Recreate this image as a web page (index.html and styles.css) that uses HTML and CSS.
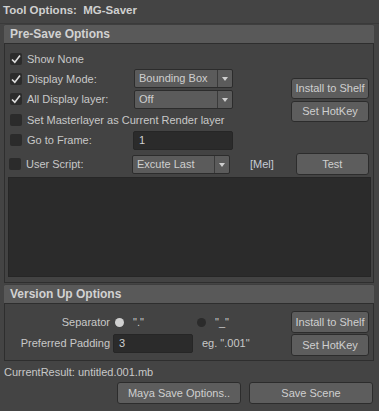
FILE: index.html
```html
<!DOCTYPE html>
<html>
<head>
<meta charset="utf-8">
<link rel="stylesheet" href="styles.css">
</head>
<body>
<div class="win">
  <div class="title">Tool Options:&nbsp; MG-Saver</div>

  <div class="frame">
    <div class="frame-head">Pre-Save Options</div>
    <div class="frame-body pre">
      <div class="grid">
        <label class="cbrow r1"><span class="cb on"><svg viewBox="0 0 12 12"><polyline points="2,6.5 4.8,9.2 10,2.5"/></svg></span>Show None</label>

        <label class="cbrow r2"><span class="cb on"><svg viewBox="0 0 12 12"><polyline points="2,6.5 4.8,9.2 10,2.5"/></svg></span>Display Mode:</label>
        <div class="dd r2c"><span class="dd-text">Bounding Box</span><span class="dd-arrow"></span></div>

        <label class="cbrow r3"><span class="cb on"><svg viewBox="0 0 12 12"><polyline points="2,6.5 4.8,9.2 10,2.5"/></svg></span>All Display layer:</label>
        <div class="dd r3c"><span class="dd-text">Off</span><span class="dd-arrow"></span></div>

        <label class="cbrow r4 wide"><span class="cb"></span>Set Masterlayer as Current Render layer</label>

        <label class="cbrow r5"><span class="cb"></span>Go to Frame:</label>
        <div class="field r5c">1</div>

        <div class="btncol">
          <div class="btn">Install to Shelf</div>
          <div class="btn">Set HotKey</div>
        </div>
      </div>

      <div class="script-row">
        <label class="cbrow us"><span class="cb"></span>User Script:</label>
        <div class="dd sdd"><span class="dd-text">Excute Last</span><span class="dd-arrow"></span></div>
        <span class="mel">[Mel]</span>
        <div class="btn test">Test</div>
      </div>

      <div class="textarea"></div>
    </div>
  </div>

  <div class="frame second">
    <div class="frame-head">Version Up Options</div>
    <div class="frame-body ver">
      <div class="vgrid">
        <div class="vlabel">Separator</div>
        <div class="radios">
          <span class="ropt"><span class="radio on"></span>"."</span>
          <span class="ropt"><span class="radio"></span>"_"</span>
        </div>
        <div class="vlabel">Preferred Padding</div>
        <div class="padrow">
          <div class="field pad">3</div>
          <span class="eg">eg. ".001"</span>
        </div>
      </div>
      <div class="btncol2">
        <div class="btn">Install to Shelf</div>
        <div class="btn">Set HotKey</div>
      </div>
    </div>
  </div>

  <div class="result">CurrentResult: untitled.001.mb</div>

  <div class="bottom">
    <div class="btn big">Maya Save Options..</div>
    <div class="btn big">Save Scene</div>
  </div>
</div>
</body>
</html>
```

FILE: styles.css
```css
html, body {
  margin: 0;
  padding: 0;
  background: #444444;
}
body {
  width: 379px;
  height: 411px;
  overflow: hidden;
  font-family: "Liberation Sans", Arial, sans-serif;
  font-size: 11px;
  color: #c8c8c8;
}
.win {
  display: flex;
  flex-direction: column;
}
.title {
  height: 23px;
  line-height: 21px;
  padding-left: 3px;
  font-weight: bold;
  font-size: 11.5px;
  color: #d0d0d0;
  border-bottom: 1px solid #3a3a3a;
}
.frame {
  margin: 0 5px 0 4px;
}
.frame.second {
  margin-top: 1px;
}
.frame-head {
  height: 18px;
  line-height: 18px;
  background: #595959;
  border-top: 1px solid #3e3e3e;
  border-radius: 2px 2px 0 0;
  padding-left: 6px;
  font-weight: bold;
  font-size: 12px;
  color: #d2d2d2;
}
.frame-body {
  border: 1px solid #2e2e2e;
  background: #434343;
}
.pre {
  padding: 5px 0 5px 0;
}
.grid {
  display: grid;
  grid-template-columns: 124px 99px 1fr;
  grid-template-rows: 20px 19px 22px 20px 20px;
  padding-left: 5px;
}
.cbrow {
  display: flex;
  align-items: center;
  gap: 5px;
  white-space: nowrap;
}
.r1 { grid-row: 1; grid-column: 1 / 3; }
.r2 { grid-row: 2; grid-column: 1; }
.r2c { grid-row: 2; grid-column: 2; }
.r3 { grid-row: 3; grid-column: 1; }
.r3c { grid-row: 3; grid-column: 2; }
.r4 { grid-row: 4; grid-column: 1 / 4; }
.r5 { grid-row: 5; grid-column: 1; }
.r5c { grid-row: 5; grid-column: 2; }
.cb {
  width: 12px;
  height: 12px;
  background: #2b2b2b;
  border-radius: 2px;
  display: inline-flex;
  flex: none;
}
.cb svg {
  width: 12px;
  height: 12px;
  fill: none;
  stroke: #dcdcdc;
  stroke-width: 1.6;
}
.dd {
  align-self: center;
  height: 17px;
  background: #5b5b5b;
  border: 1px solid #2c2c2c;
  border-radius: 2px;
  display: flex;
  align-items: stretch;
}
.dd-text {
  flex: 1;
  padding-left: 4px;
  line-height: 17px;
  color: #cfcfcf;
}
.dd-arrow {
  width: 14px;
  border-left: 1px solid #3a3a3a;
  position: relative;
}
.dd-arrow::after {
  content: "";
  position: absolute;
  left: 4px;
  top: 7px;
  border-left: 3.5px solid transparent;
  border-right: 3.5px solid transparent;
  border-top: 4px solid #cfcfcf;
}
.field {
  align-self: center;
  height: 17px;
  line-height: 17px;
  background: #2b2b2b;
  border: 1px solid #262626;
  border-radius: 2px;
  padding-left: 5px;
  color: #d0d0d0;
  box-sizing: content-box;
}
.r5c {
  margin-left: -1px;
}
.btncol {
  grid-column: 3;
  grid-row: 2 / 6;
  justify-self: end;
  margin: 9px 4px 0 0;
  display: flex;
  flex-direction: column;
  gap: 2px;
}
.btn {
  box-sizing: border-box;
  height: 22px;
  line-height: 20px;
  background: #5d5d5d;
  border: 1px solid #2c2c2c;
  border-radius: 3px;
  text-align: center;
  color: #cfcfcf;
  white-space: nowrap;
}
.btncol .btn, .btncol2 .btn {
  width: 78px;
}
.btncol .btn {
  height: 21px;
  line-height: 19px;
}
.script-row {
  display: flex;
  align-items: center;
  height: 22px;
  margin-top: 3px;
  padding-left: 4px;
}
.us {
  width: 123px;
}
.sdd {
  width: 96px;
}
.mel {
  margin-left: 20px;
  color: #c6ccd6;
}
.test {
  width: 73px;
  margin-left: 22px;
}
.textarea {
  margin: 2px 2px 0 3px;
  height: 98px;
  background: #2b2b2b;
  border: 1px solid #262626;
}
.ver {
  display: flex;
  justify-content: space-between;
  padding: 7px 4px 4px 0;
}
.vgrid {
  display: grid;
  grid-template-columns: 105px 1fr;
  grid-template-rows: 20px 22px;
  column-gap: 3px;
  margin-top: 1px;
}
.vlabel {
  text-align: right;
  align-self: center;
  padding-left: 5px;
  white-space: nowrap;
}
.radios {
  display: flex;
  align-items: center;
  padding-left: 2px;
}
.ropt {
  display: inline-flex;
  align-items: center;
  gap: 9px;
  width: 82px;
}
.radio {
  width: 9px;
  height: 9px;
  border-radius: 50%;
  background: #2b2b2b;
  display: inline-block;
}
.radio.on {
  background: #d0d0d0;
}
.padrow {
  display: flex;
  align-items: center;
}
.pad {
  width: 73px;
}
.eg {
  margin-left: 9px;
}
.btncol2 {
  display: flex;
  flex-direction: column;
  gap: 1px;
}
.result {
  height: 20px;
  line-height: 20px;
  padding-left: 4px;
  margin-top: 1px;
}
.bottom {
  display: flex;
  justify-content: flex-end;
  gap: 8px;
  padding-right: 6px;
}
.big {
  width: 124px;
}
```
